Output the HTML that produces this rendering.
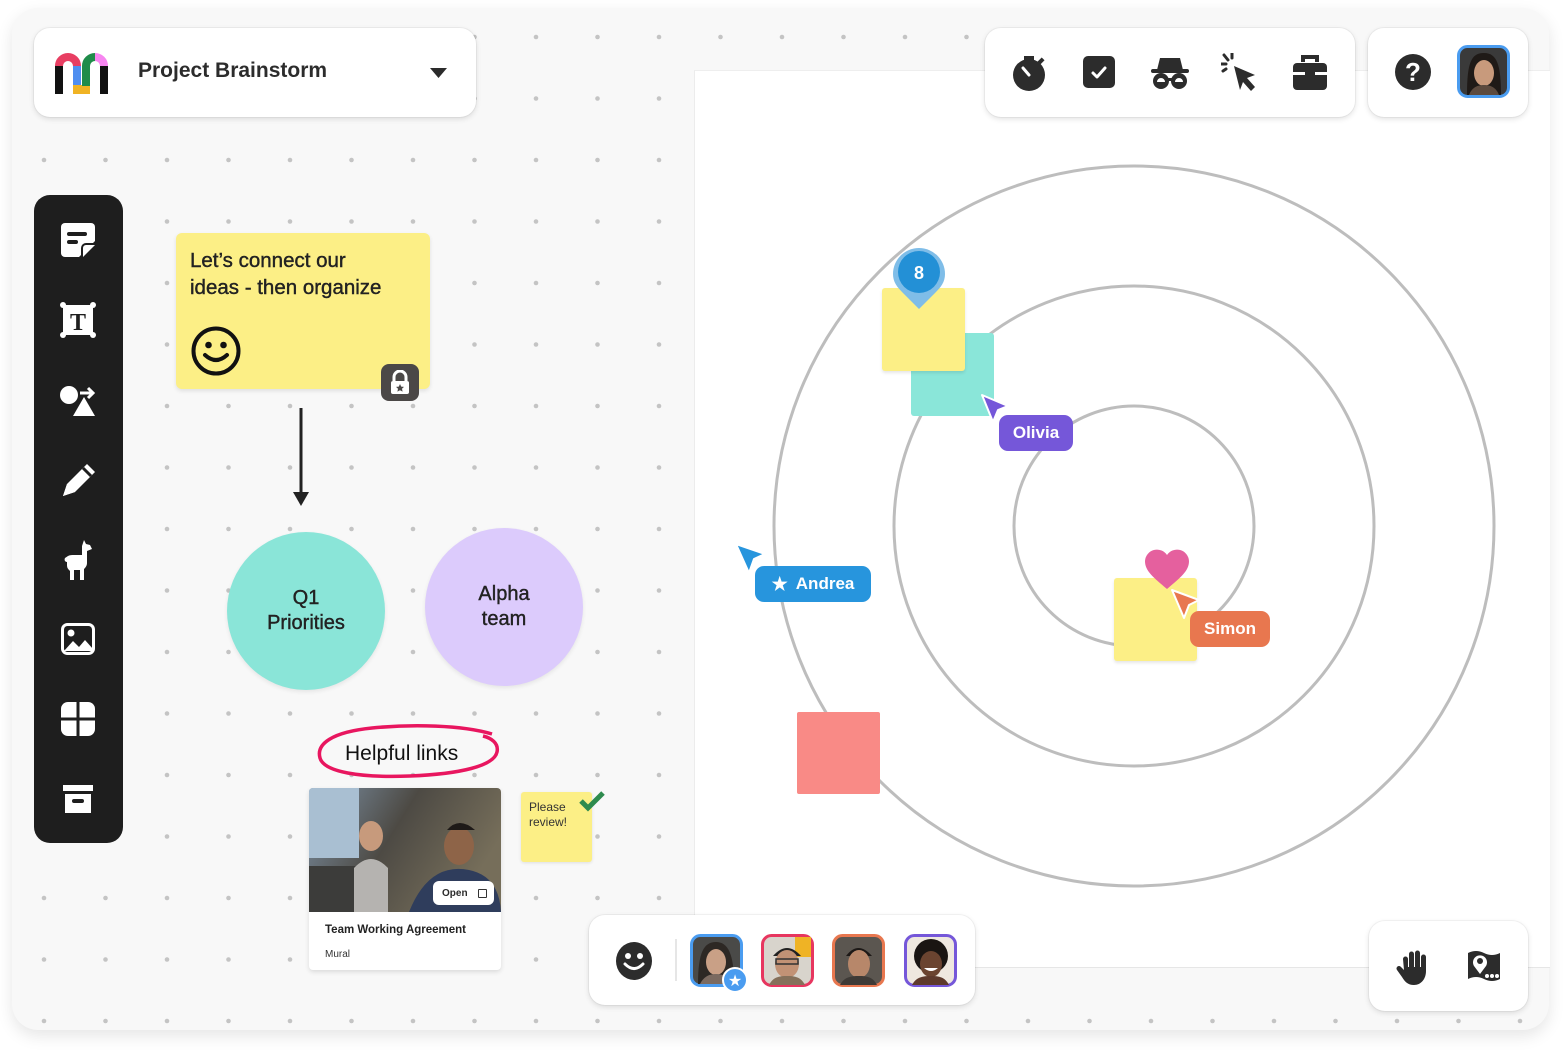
<!DOCTYPE html>
<html><head><meta charset="utf-8">
<style>
*{margin:0;padding:0;box-sizing:border-box}
body{width:1568px;height:1056px;background:#fff;font-family:"Liberation Sans",sans-serif;position:relative;overflow:hidden;color:#2b2b2b}
.abs{position:absolute}
.frame{left:12px;top:8px;width:1537px;height:1022px;border-radius:26px;background:#f8f8f8;box-shadow:0 6px 16px rgba(0,0,0,.10);overflow:hidden}
.card{background:#fff;border-radius:16px;box-shadow:0 2px 6px rgba(0,0,0,.12),0 0 0 1px rgba(0,0,0,.04)}
.lbl{color:#fff;font-weight:bold;font-size:17px;border-radius:9px;display:flex;align-items:center;justify-content:center}
.circ{border-radius:50%;display:flex;align-items:center;justify-content:center;text-align:center;font-size:20px;line-height:25px;color:#222;box-shadow:0 2px 4px rgba(0,0,0,.08);-webkit-text-stroke:0.4px #222}
</style></head><body>
<div class="abs frame">
<svg class="abs" style="left:0;top:0" width="1537" height="1022">
<defs><pattern id="d" x="32" y="29" width="61.5" height="61.5" patternUnits="userSpaceOnUse"><circle cx="0" cy="0" r="2.3" fill="#c4c4c4"/><circle cx="61.5" cy="0" r="2.3" fill="#c4c4c4"/><circle cx="0" cy="61.5" r="2.3" fill="#c4c4c4"/><circle cx="61.5" cy="61.5" r="2.3" fill="#c4c4c4"/></pattern></defs>
<rect width="1537" height="1022" fill="url(#d)"/>
</svg>
</div>
<div class="abs" style="left:694px;top:70px;width:856px;height:898px;background:#fff;border-left:1px solid #ececec;border-bottom:1px solid #e6e6e6;border-top:1px solid #eee"></div>
<svg class="abs" style="left:0;top:0" width="1568" height="1056">
<circle cx="1134" cy="526" r="360" fill="none" stroke="#bdbdbd" stroke-width="3"/>
<circle cx="1134" cy="526" r="240" fill="none" stroke="#bdbdbd" stroke-width="3"/>
<circle cx="1134" cy="526" r="120" fill="none" stroke="#bdbdbd" stroke-width="3"/>
</svg>

<div class="abs card" style="left:34px;top:28px;width:442px;height:89px">
 <svg class="abs" style="left:21px;top:24px" width="56" height="42" viewBox="0 0 56 42">
  <path d="M4 42V13" stroke="#111" stroke-width="8"/>
  <path d="M4 14a9 9 0 0 1 18 0" fill="none" stroke="#e83e62" stroke-width="8"/>
  <rect x="18" y="14" width="8" height="28" fill="#4f8ef0"/>
  <rect x="18" y="33" width="17" height="9" fill="#f0b324"/>
  <path d="M31 34V14a9 9 0 0 1 9-9" fill="none" stroke="#1f8c4a" stroke-width="8"/>
  <path d="M40 5a9 9 0 0 1 9 9" fill="none" stroke="#f786f0" stroke-width="8"/>
  <rect x="45" y="14" width="8" height="28" fill="#111"/>
 </svg>
 <div class="abs" style="left:104px;top:31px;font-size:21px;font-weight:bold;color:#2c2c2c">Project Brainstorm</div>
 <svg class="abs" style="left:396px;top:40px" width="17" height="10"><path d="M0 0h17L8.5 10z" fill="#2b2b2b"/></svg>
</div>

<div class="abs card" style="left:985px;top:28px;width:370px;height:89px">
 <svg class="abs" style="left:26px;top:26px" width="36" height="38" viewBox="0 0 36 38"><circle cx="18" cy="21" r="16" fill="#2c2c2c"/><rect x="13" y="2" width="10" height="4" fill="#2c2c2c"/><rect x="28" y="4" width="4" height="7" transform="rotate(45 30 7)" fill="#2c2c2c"/><path d="M12 14l6 7" stroke="#fff" stroke-width="3" stroke-linecap="round"/></svg>
 <svg class="abs" style="left:98px;top:28px" width="32" height="32"><rect width="32" height="32" rx="5" fill="#2c2c2c"/><path d="M10 17l4 4 8-9" fill="none" stroke="#fff" stroke-width="3" stroke-linecap="round" stroke-linejoin="round"/></svg>
 <svg class="abs" style="left:166px;top:28px" width="38" height="34" viewBox="0 0 38 34"><path d="M9 2h20l3 12H6z" fill="#2c2c2c"/><rect x="0" y="13" width="38" height="4" rx="2" fill="#2c2c2c"/><circle cx="10" cy="25" r="8" fill="#2c2c2c"/><circle cx="28" cy="25" r="8" fill="#2c2c2c"/><rect x="15" y="22" width="8" height="3" fill="#2c2c2c"/><path d="M6 26a4 4 0 0 1 8 0M24 26a4 4 0 0 1 8 0" fill="#fff"/></svg>
 <svg class="abs" style="left:236px;top:25px" width="38" height="40" viewBox="0 0 38 40"><path d="M13 13l21 9-8 3 8 9-4 4-8-9-3 8z" fill="#2c2c2c"/><path d="M3 2l4 5M11 0v5M0 11h5M2 18l3-2" stroke="#2c2c2c" stroke-width="3" stroke-linecap="round"/></svg>
 <svg class="abs" style="left:308px;top:26px" width="34" height="36" viewBox="0 0 34 36"><path d="M10 8V3h14v5" fill="none" stroke="#2c2c2c" stroke-width="4"/><rect x="0" y="9" width="34" height="27" rx="4" fill="#2c2c2c"/><rect x="0" y="18" width="34" height="3" fill="#fff"/><rect x="12" y="17" width="10" height="6" rx="1" fill="#2c2c2c"/></svg>
</div>
<div class="abs card" style="left:1368px;top:28px;width:160px;height:89px">
 <svg class="abs" style="left:27px;top:26px" width="36" height="36"><circle cx="18" cy="18" r="18" fill="#2c2c2c"/><text x="18" y="27" text-anchor="middle" font-family="Liberation Sans" font-weight="bold" font-size="26" fill="#fff">?</text></svg>
 <svg class="abs" style="left:89px;top:17px" width="53" height="53"><rect x="1.5" y="1.5" width="50" height="50" rx="9" fill="#3a3a3a" stroke="#4a9cf0" stroke-width="3"/><path d="M10 50C10 18 14 8 27 8s17 12 17 42z" fill="#1f1a17"/><ellipse cx="27" cy="28" rx="10" ry="13" fill="#c89a7c"/><path d="M12 50c3-8 9-10 15-10s12 2 15 10z" fill="#5c4a3e"/></svg>
</div>

<div class="abs" style="left:34px;top:195px;width:89px;height:648px;background:#1e1e1e;border-radius:16px">
 <svg class="abs" style="left:27px;top:28px" width="34" height="34" viewBox="0 0 34 34"><path d="M4 0h26a4 4 0 0 1 4 4v14L18 34H4a4 4 0 0 1-4-4V4a4 4 0 0 1 4-4z" fill="#fff"/><rect x="6" y="9" width="20" height="4" rx="2" fill="#1e1e1e"/><rect x="6" y="17" width="11" height="4" rx="2" fill="#1e1e1e"/><path d="M34 22L22 34V26a4 4 0 0 1 4-4z" fill="#fff"/><path d="M21 33V25a4 4 0 0 1 4-4h8" fill="none" stroke="#1e1e1e" stroke-width="2"/></svg>
 <svg class="abs" style="left:26px;top:107px" width="36" height="36" viewBox="0 0 36 36"><rect x="3" y="3" width="30" height="30" fill="#fff"/><circle cx="3" cy="3" r="3" fill="#fff"/><circle cx="33" cy="3" r="3" fill="#fff"/><circle cx="3" cy="33" r="3" fill="#fff"/><circle cx="33" cy="33" r="3" fill="#fff"/><text x="18" y="28" text-anchor="middle" font-family="Liberation Serif" font-weight="bold" font-size="24" fill="#1e1e1e">T</text></svg>
 <svg class="abs" style="left:26px;top:190px" width="36" height="32" viewBox="0 0 36 32"><circle cx="9" cy="10" r="9" fill="#fff"/><path d="M24 12l11 19H13z" fill="#fff"/><path d="M20 8h13M28 3l5 5-5 5" fill="none" stroke="#fff" stroke-width="3"/></svg>
 <svg class="abs" style="left:27px;top:267px" width="36" height="36" viewBox="0 0 36 36"><path d="M26 2l8 8-20 20-12 4 4-12z" fill="#fff"/><path d="M22 6l8 8" stroke="#1e1e1e" stroke-width="3"/><path d="M2 34l4-12 8 8z" fill="#fff"/></svg>
 <svg class="abs" style="left:28px;top:343px" width="32" height="42" viewBox="0 0 32 42"><path d="M22 2l2 4 4 1 2 4-5 2v12c0 3-2 5-3 6v11h-4V32h-6v10H8V33c-2-2-3-3-3-6V24c-2 0-3-2-2-4l3-2c2-1 4-1 6-1h8V8z" fill="#fff"/></svg>
 <svg class="abs" style="left:27px;top:428px" width="34" height="32" viewBox="0 0 34 32"><rect x="1.5" y="1.5" width="31" height="29" rx="5" fill="none" stroke="#fff" stroke-width="3"/><circle cx="10" cy="10" r="3.5" fill="#fff"/><path d="M3 28l9-10 6 6 6-7 8 9v2H3z" fill="#fff"/></svg>
 <svg class="abs" style="left:27px;top:507px" width="34" height="34"><rect width="34" height="34" rx="7" fill="#fff"/><rect x="15.5" width="3" height="34" fill="#1e1e1e"/><rect y="15.5" width="34" height="3" fill="#1e1e1e"/></svg>
 <svg class="abs" style="left:29px;top:590px" width="30" height="28"><rect width="30" height="6" fill="#fff"/><rect x="2" y="9" width="26" height="19" fill="#fff"/><rect x="9" y="14" width="12" height="4" rx="2" fill="#1e1e1e"/></svg>
</div>

<div class="abs" style="left:176px;top:233px;width:254px;height:156px;background:#fcef86;border-radius:6px;box-shadow:0 2px 4px rgba(0,0,0,.1)">
 <div class="abs" style="left:14px;top:14px;font-size:20.5px;line-height:27px;color:#222;-webkit-text-stroke:0.4px #222">Let’s connect our<br>ideas - then organize</div>
 <svg class="abs" style="left:15px;top:93px" width="50" height="50"><circle cx="25" cy="25" r="22.5" fill="none" stroke="#111" stroke-width="4"/><circle cx="17.5" cy="19" r="3.3" fill="#111"/><circle cx="32.5" cy="19" r="3.3" fill="#111"/><path d="M14 29q11 10 22 0" fill="none" stroke="#111" stroke-width="4" stroke-linecap="round"/></svg>
</div>
<div class="abs" style="left:381px;top:364px;width:38px;height:37px;background:#4b4847;border-radius:8px">
 <svg class="abs" style="left:9px;top:6px" width="20" height="24"><path d="M4 11V7a6 6 0 0 1 12 0v4" fill="none" stroke="#fff" stroke-width="3"/><rect x="1" y="11" width="18" height="13" rx="2" fill="#fff"/><path d="M10 14l1.2 2.6 2.8.3-2 1.9.6 2.8-2.6-1.4-2.6 1.4.6-2.8-2-1.9 2.8-.3z" fill="#4b4847"/></svg>
</div>
<svg class="abs" style="left:290px;top:408px" width="22" height="100"><path d="M11 0v88" stroke="#222" stroke-width="3"/><path d="M3 84h16l-8 14z" fill="#222"/></svg>

<div class="abs circ" style="left:227px;top:532px;width:158px;height:158px;background:#8ae5d8">Q1<br>Priorities</div>
<div class="abs circ" style="left:425px;top:528px;width:158px;height:158px;background:#dccbfc">Alpha<br>team</div>

<svg class="abs" style="left:312px;top:722px" width="192" height="62"><path d="M180 12C150 3 100 2 60 6 20 10 4 22 8 36c4 14 40 20 90 18 50-2 84-10 87-24 2-9-6-14-14-16" fill="none" stroke="#e8165f" stroke-width="3.5"/></svg>
<div class="abs" style="left:345px;top:742px;font-size:21px;color:#111">Helpful links</div>

<div class="abs" style="left:309px;top:788px;width:192px;height:182px;background:#fff;border-radius:4px;box-shadow:0 2px 5px rgba(0,0,0,.12);overflow:hidden">
 <svg class="abs" style="left:0;top:0" width="192" height="124">
  <defs><linearGradient id="g" x1="0" y1="0" x2="1" y2="0.4"><stop offset="0" stop-color="#7e93a8"/><stop offset=".5" stop-color="#4d4a44"/><stop offset="1" stop-color="#766e5a"/></linearGradient></defs>
  <rect width="192" height="124" fill="url(#g)"/>
  <rect x="0" y="0" width="50" height="70" fill="#a9bfd2"/>
  <rect x="0" y="78" width="65" height="46" fill="#3c3c3a"/>
  <ellipse cx="62" cy="48" rx="12" ry="15" fill="#c79a7c"/><path d="M45 124V80q17-18 34 0v44z" fill="#b5b3b0"/>
  <ellipse cx="150" cy="58" rx="15" ry="19" fill="#8e6448"/><path d="M138 42q12-14 28 0" fill="#1e1a18"/><path d="M100 124q20-50 60-42 30 6 32 42z" fill="#2f3d5c"/>
 </svg>
 <div class="abs" style="left:124px;top:93px;width:61px;height:24px;background:#fff;border-radius:6px;font-size:10px;font-weight:bold;display:flex;align-items:center;padding-left:9px;gap:10px">Open <span style="display:inline-block;width:9px;height:9px;border:1.5px solid #333;border-radius:1px"></span></div>
 <div class="abs" style="left:16px;top:136px;font-size:11.5px;font-weight:bold;color:#222">Team Working Agreement</div>
 <div class="abs" style="left:16px;top:161px;font-size:10px;color:#333">Mural</div>
</div>
<div class="abs" style="left:521px;top:792px;width:71px;height:70px;background:#fcef86;border-radius:3px;box-shadow:0 1px 3px rgba(0,0,0,.1);font-size:12px;line-height:15px;padding:8px 0 0 8px;color:#333">Please<br>review!</div>
<svg class="abs" style="left:578px;top:790px" width="28" height="22"><path d="M3 11l7 7L25 3" fill="none" stroke="#2e8b4e" stroke-width="5"/></svg>

<div class="abs" style="left:911px;top:333px;width:83px;height:83px;background:#8ae6d9;border-radius:3px"></div>
<div class="abs" style="left:882px;top:288px;width:83px;height:83px;background:#fcef86;border-radius:3px;box-shadow:0 2px 3px rgba(0,0,0,.1)"></div>
<svg class="abs" style="left:889px;top:245px" width="60" height="70"><path d="M4 29a26 26 0 1 1 52 0c0 8-4 13-10 19L30 64 14 48C8 42 4 37 4 29z" fill="#7fbde8"/><circle cx="30" cy="27" r="21" fill="#2390d6"/><text x="30" y="34" text-anchor="middle" font-family="Liberation Sans" font-weight="bold" font-size="18" fill="#fff">8</text></svg>
<svg class="abs" style="left:979px;top:393px" width="32" height="34"><path d="M3 2l26 11-10 4-5 12z" fill="#7557d9" stroke="#fff" stroke-width="2" stroke-linejoin="round"/></svg>
<div class="abs lbl" style="left:999px;top:415px;width:74px;height:36px;background:#7557d9">Olivia</div>

<svg class="abs" style="left:733px;top:542px" width="36" height="36"><path d="M3 2l29 10-11 5-5 14z" fill="#2795dd" stroke="#fff" stroke-width="2" stroke-linejoin="round"/></svg>
<div class="abs lbl" style="left:755px;top:566px;width:116px;height:36px;background:#2795dd;gap:8px"><span style="font-size:18px">★</span>Andrea</div>

<div class="abs" style="left:797px;top:712px;width:83px;height:82px;background:#f98a86;border-radius:2px"></div>

<div class="abs" style="left:1114px;top:578px;width:83px;height:83px;background:#fcef86;border-radius:3px;box-shadow:0 2px 3px rgba(0,0,0,.1)"></div>
<svg class="abs" style="left:1143px;top:547px" width="48" height="44"><path d="M24 42C10 30 2 24 2 14A12 12 0 0 1 24 8a12 12 0 0 1 22 6c0 10-8 16-22 28z" fill="#e5609e"/></svg>
<svg class="abs" style="left:1169px;top:588px" width="34" height="36"><path d="M3 2l27 10-10 5-5 13z" fill="#e8774f" stroke="#fff" stroke-width="2" stroke-linejoin="round"/></svg>
<div class="abs lbl" style="left:1190px;top:611px;width:80px;height:36px;background:#e8774f">Simon</div>

<div class="abs card" style="left:589px;top:915px;width:386px;height:90px">
 <svg class="abs" style="left:27px;top:27px" width="36" height="38"><ellipse cx="18" cy="19" rx="18" ry="19" fill="#2c2c2c"/><circle cx="12" cy="14" r="3" fill="#fff"/><circle cx="24" cy="14" r="3" fill="#fff"/><path d="M9 22q9 9 18 0" fill="none" stroke="#fff" stroke-width="3" stroke-linecap="round"/></svg>
 <div class="abs" style="left:86px;top:24px;width:2px;height:42px;background:#e6e6e6"></div>
 <svg class="abs" style="left:101px;top:19px" width="62" height="60"><rect x="1.5" y="1.5" width="50" height="50" rx="9" fill="#4a4a48" stroke="#4a9cf0" stroke-width="3"/><path d="M8 50C8 18 14 8 26 8s18 12 18 42z" fill="#2d2824"/><ellipse cx="26" cy="28" rx="10" ry="13" fill="#c9a086"/><path d="M10 50c4-8 10-10 16-10s12 2 16 10z" fill="#7b6a60"/><circle cx="45" cy="46" r="12" fill="#4a9cf0" stroke="#fff" stroke-width="2"/><text x="45" y="52" text-anchor="middle" font-size="16" fill="#fff" font-family="DejaVu Sans">★</text></svg>
 <svg class="abs" style="left:172px;top:19px" width="54" height="54"><rect x="1.5" y="1.5" width="50" height="50" rx="9" fill="#d8d4cc" stroke="#e7365f" stroke-width="3"/><rect x="34" y="3" width="16" height="20" fill="#efb325"/><path d="M12 22q14-16 28 0" fill="#222"/><ellipse cx="26" cy="30" rx="12" ry="14" fill="#c29275"/><rect x="15" y="25" width="22" height="5" fill="none" stroke="#333" stroke-width="1.5"/><path d="M8 51c4-8 10-9 18-9s14 1 18 9z" fill="#85705a"/></svg>
 <svg class="abs" style="left:243px;top:19px" width="54" height="54"><rect x="1.5" y="1.5" width="50" height="50" rx="9" fill="#5b5650" stroke="#e8774f" stroke-width="3"/><path d="M14 22q12-16 26 0" fill="#1d1917"/><ellipse cx="27" cy="30" rx="11" ry="14" fill="#b7876a"/><path d="M8 51c4-8 11-9 19-9s14 1 18 9z" fill="#3e3a36"/></svg>
 <svg class="abs" style="left:315px;top:19px" width="54" height="54"><rect x="1.5" y="1.5" width="50" height="50" rx="9" fill="#efe8df" stroke="#7557d9" stroke-width="3"/><circle cx="27" cy="22" r="17" fill="#1a1512"/><ellipse cx="27" cy="30" rx="11" ry="13" fill="#6b4430"/><path d="M20 34q7 6 14 0" fill="#fff"/><path d="M8 51c4-8 11-9 19-9s14 1 18 9z" fill="#5e3a2c"/></svg>
</div>
<div class="abs card" style="left:1369px;top:921px;width:159px;height:90px">
 <svg class="abs" style="left:27px;top:28px" width="36" height="36" viewBox="0 0 36 36"><path d="M7 10a2.5 2.5 0 0 1 5 0v8h1V5a2.5 2.5 0 0 1 5 0v13h1V4a2.5 2.5 0 0 1 5 0v14h1V8a2.5 2.5 0 0 1 5 0v14c0 8-5 14-12 14-6 0-9-3-12-8l-5-7a2.5 2.5 0 0 1 4-3l3 3z" fill="#2c2c2c"/></svg>
 <svg class="abs" style="left:97px;top:28px" width="36" height="34" viewBox="0 0 36 34"><path d="M2 4q8-4 16 0t16 0v26q-8 4-16 0T2 30z" fill="#2c2c2c"/><path d="M14 25l-6-8a7 7 0 1 1 12 0z" fill="#fff"/><circle cx="14" cy="12" r="3" fill="#2c2c2c"/><circle cx="21" cy="27" r="2" fill="#fff"/><circle cx="26" cy="27" r="2" fill="#fff"/><circle cx="31" cy="27" r="2" fill="#fff"/></svg>
</div>
</body></html>
